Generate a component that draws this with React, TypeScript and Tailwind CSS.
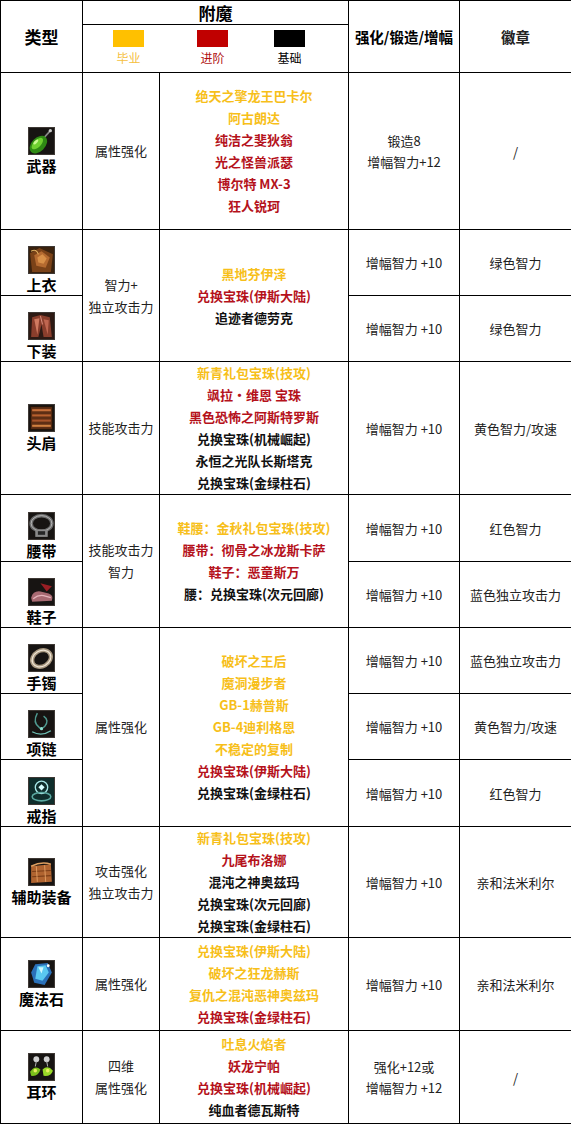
type Tone = "g" | "r" | "k";
type Line = [string, Tone];

type Item = {
  icon: string;
  name: string;
  h: string;
  short?: boolean;
  up: string[];
  badge: string;
};

type Group = {
  attr: string[];
  ench: Line[];
  items: Item[];
};

const toneClass: Record<Tone, string> = {
  g: "text-[#f7bf1a]",
  r: "text-[#b5121b]",
  k: "text-[#111]",
};

const groups: Group[] = [
  {
    attr: ["属性强化"],
    ench: [
      ["绝天之擎龙王巴卡尔", "g"],
      ["阿古朗达", "g"],
      ["纯洁之斐狄翁", "r"],
      ["光之怪兽派瑟", "r"],
      ["博尔特 MX-3", "r"],
      ["狂人锐珂", "r"],
    ],
    items: [{ icon: "weapon", name: "武器", h: "h-[157px]", up: ["锻造8", "增幅智力+12"], badge: "/" }],
  },
  {
    attr: ["智力+", "独立攻击力"],
    ench: [
      ["黑地芬伊泽", "g"],
      ["兑换宝珠(伊斯大陆)", "r"],
      ["追迹者德劳克", "k"],
    ],
    items: [
      { icon: "top", name: "上衣", h: "h-[66px]", short: true, up: ["增幅智力 +10"], badge: "绿色智力" },
      { icon: "bottom", name: "下装", h: "h-[66px]", short: true, up: ["增幅智力 +10"], badge: "绿色智力" },
    ],
  },
  {
    attr: ["技能攻击力"],
    ench: [
      ["新青礼包宝珠(技攻)", "g"],
      ["飒拉·维恩 宝珠", "r"],
      ["黑色恐怖之阿斯特罗斯", "r"],
      ["兑换宝珠(机械崛起)", "k"],
      ["永恒之光队长斯塔克", "k"],
      ["兑换宝珠(金绿柱石)", "k"],
    ],
    items: [{ icon: "shoulder", name: "头肩", h: "h-[133px]", up: ["增幅智力 +10"], badge: "黄色智力/攻速" }],
  },
  {
    attr: ["技能攻击力", "智力"],
    ench: [
      ["鞋腰：金秋礼包宝珠(技攻)", "g"],
      ["腰带：彻骨之冰龙斯卡萨", "r"],
      ["鞋子：恶童斯万", "r"],
      ["腰：兑换宝珠(次元回廊)", "k"],
    ],
    items: [
      { icon: "belt", name: "腰带", h: "h-[67px]", short: true, up: ["增幅智力 +10"], badge: "红色智力" },
      { icon: "shoes", name: "鞋子", h: "h-[66px]", short: true, up: ["增幅智力 +10"], badge: "蓝色独立攻击力" },
    ],
  },
  {
    attr: ["属性强化"],
    ench: [
      ["破坏之王后", "g"],
      ["魔洞漫步者", "g"],
      ["GB-1赫普斯", "g"],
      ["GB-4迪利格恩", "g"],
      ["不稳定的复制", "g"],
      ["兑换宝珠(伊斯大陆)", "r"],
      ["兑换宝珠(金绿柱石)", "k"],
    ],
    items: [
      { icon: "bracelet", name: "手镯", h: "h-[66px]", short: true, up: ["增幅智力 +10"], badge: "蓝色独立攻击力" },
      { icon: "necklace", name: "项链", h: "h-[66px]", short: true, up: ["增幅智力 +10"], badge: "黄色智力/攻速" },
      { icon: "ring", name: "戒指", h: "h-[67px]", short: true, up: ["增幅智力 +10"], badge: "红色智力" },
    ],
  },
  {
    attr: ["攻击强化", "独立攻击力"],
    ench: [
      ["新青礼包宝珠(技攻)", "g"],
      ["九尾布洛娜", "r"],
      ["混沌之神奥兹玛", "k"],
      ["兑换宝珠(次元回廊)", "k"],
      ["兑换宝珠(金绿柱石)", "k"],
    ],
    items: [{ icon: "aux", name: "辅助装备", h: "h-[111px]", up: ["增幅智力 +10"], badge: "亲和法米利尔" }],
  },
  {
    attr: ["属性强化"],
    ench: [
      ["兑换宝珠(伊斯大陆)", "g"],
      ["破坏之狂龙赫斯", "g"],
      ["复仇之混沌恶神奥兹玛", "g"],
      ["兑换宝珠(金绿柱石)", "r"],
    ],
    items: [{ icon: "stone", name: "魔法石", h: "h-[93px]", up: ["增幅智力 +10"], badge: "亲和法米利尔" }],
  },
  {
    attr: ["四维", "属性强化"],
    ench: [
      ["吐息火焰者", "g"],
      ["妖龙宁帕", "r"],
      ["兑换宝珠(机械崛起)", "r"],
      ["纯血者德瓦斯特", "k"],
    ],
    items: [{ icon: "earring", name: "耳环", h: "h-[93px]", up: ["强化+12或", "增幅智力 +12"], badge: "/" }],
  },
];

function ItemIcon({ kind }: { kind: string }) {
  return (
    <svg width="27" height="28" viewBox="0 0 26 27" className="block">
      <rect x="0.5" y="0.5" width="25" height="26" fill="#171412" stroke="#3e3834" />
      {kind === "weapon" && (
        <>
          <line x1="13" y1="13" x2="22" y2="3" stroke="#8a8a8a" strokeWidth="1.6" />
          <circle cx="21.5" cy="3.5" r="1.6" fill="#c8c8c8" />
          <ellipse cx="10" cy="17" rx="10" ry="6.5" transform="rotate(-45 10 17)" fill="#2f8a14" />
          <ellipse cx="9" cy="16" rx="7" ry="3.5" transform="rotate(-45 9 16)" fill="#6fd030" />
          <ellipse cx="7.5" cy="14.5" rx="3" ry="1.3" transform="rotate(-45 7.5 14.5)" fill="#c8f890" />
        </>
      )}
      {kind === "top" && (
        <>
          <rect x="1" y="1" width="24" height="25" fill="#3a220e" />
          <path d="M2 7 L11 2 L24 8 L22 25 L4 25 Z" fill="#7a4218" />
          <path d="M6 9 L13 5 L21 11 L17 21 L8 19 Z" fill="#b46a30" />
          <path d="M9 11 L14 8 L18 12 L15 17 L10 16 Z" fill="#d89048" />
          <path d="M3 5 Q8 2 10 8" stroke="#e0b060" strokeWidth="1" fill="none" />
        </>
      )}
      {kind === "bottom" && (
        <>
          <rect x="1" y="1" width="24" height="25" fill="#2e1a14" />
          <path d="M4 5 L12 3 L21 5 L23 24 L15 24 L13 12 L10 24 L3 24 Z" fill="#8a3e2c" />
          <path d="M6 7 L11 6 L9 22 Z" fill="#d07a60" />
          <path d="M15 7 L20 8 L19 22 Z" fill="#c06650" />
          <path d="M12 4 L14 12" stroke="#e8a090" strokeWidth="0.8" />
        </>
      )}
      {kind === "shoulder" && (
        <>
          <rect x="2.5" y="2.5" width="21" height="22" fill="#5e2e14" stroke="#231409" />
          <rect x="4" y="5" width="18" height="2" fill="#c8703a" />
          <rect x="4" y="10" width="18" height="2" fill="#b8602e" />
          <rect x="4" y="15" width="18" height="2" fill="#a8542a" />
          <rect x="4" y="20" width="18" height="2" fill="#d08040" />
        </>
      )}
      {kind === "belt" && (
        <>
          <ellipse cx="13" cy="11" rx="10" ry="7.5" fill="none" stroke="#6a6a6a" strokeWidth="3.5" />
          <ellipse cx="13" cy="11" rx="10" ry="7.5" fill="none" stroke="#c8c8c8" strokeWidth="0.8" />
          <rect x="7" y="17" width="12" height="7" fill="#8a8a8a" />
          <rect x="9.5" y="18.5" width="7" height="3.5" fill="#262626" />
        </>
      )}
      {kind === "shoes" && (
        <>
          <path d="M3 19 Q5 12 12 13 L20 15 Q25 17 23 22 L4 23 Z" fill="#a86a72" />
          <path d="M5 20 Q10 16 15 17 L22 19" stroke="#e4b4ba" strokeWidth="1.3" fill="none" />
          <path d="M12 5 L23 8 L18 13 Z" fill="#9a1e24" />
        </>
      )}
      {kind === "bracelet" && (
        <>
          <ellipse cx="13" cy="14" rx="9.5" ry="7.5" transform="rotate(-30 13 14)" fill="none" stroke="#a89880" strokeWidth="4" />
          <ellipse cx="13" cy="14" rx="9.5" ry="7.5" transform="rotate(-30 13 14)" fill="none" stroke="#f0e6d6" strokeWidth="1.2" />
        </>
      )}
      {kind === "necklace" && (
        <>
          <path d="M9 3 Q4 12 11 17 Q13 19 16 16 Q21 10 15 6" fill="none" stroke="#4f9a90" strokeWidth="1.4" />
          <path d="M4 21 Q13 26 22 20" fill="none" stroke="#6fc0b4" strokeWidth="1.3" />
          <circle cx="13" cy="18" r="1.5" fill="#8fe0d0" />
        </>
      )}
      {kind === "ring" && (
        <>
          <rect x="1" y="1" width="24" height="25" fill="#0f2e2c" />
          <circle cx="13" cy="10" r="6" fill="none" stroke="#a8e8e8" strokeWidth="1.3" />
          <path d="M10 10 L13 7 L16 10 L13 13 Z" fill="#d8ffff" />
          <ellipse cx="13" cy="19" rx="9" ry="4" fill="none" stroke="#5aa8a0" strokeWidth="1.5" />
        </>
      )}
      {kind === "aux" && (
        <>
          <path d="M3 8 L22 6 L23 23 L3 24 Z" fill="#b06430" />
          <path d="M3 8 Q13 3 22 6" stroke="#e0a060" strokeWidth="1.5" fill="none" />
          <path d="M4 13 L22 12 M4 18 L22 17" stroke="#7a3e18" strokeWidth="1" />
          <path d="M8 8 L9 23 M16 7 L17 23" stroke="#e8a468" strokeWidth="0.8" />
        </>
      )}
      {kind === "stone" && (
        <>
          <path d="M7 4 L19 3 L23 12 L16 24 L6 22 L3 12 Z" fill="#2a70b8" />
          <path d="M9 6 L17 5 L20 12 L14 20 L7 18 Z" fill="#5ac8f0" />
          <path d="M10 7 L15 7 L13 13 Z" fill="#d0f8ff" />
          <circle cx="19.5" cy="5.5" r="1.4" fill="#fff" />
        </>
      )}
      {kind === "earring" && (
        <>
          <circle cx="8" cy="6" r="2.8" fill="#d0d0d0" />
          <circle cx="18" cy="6" r="2.8" fill="#d0d0d0" />
          <path d="M8 8 L7 13 M18 8 L19 13" stroke="#aaa" strokeWidth="1" />
          <path d="M2 18 Q7 11 12 16 Q10 23 3 22 Z" fill="#7cc01c" />
          <path d="M14 16 Q19 11 24 17 Q22 23 15 22 Z" fill="#98d828" />
          <circle cx="7" cy="17" r="1.7" fill="#e8f060" />
          <circle cx="19" cy="17" r="1.7" fill="#e8f060" />
        </>
      )}
    </svg>
  );
}

export default function App() {
  const cell = "border border-black p-0 text-center align-middle";
  return (
    <div className="bg-white font-['Noto_Sans_CJK_SC',sans-serif] text-[#222]">
      <table className="w-[571px] table-fixed border-collapse">
        <colgroup>
          <col className="w-[82px]" />
          <col className="w-[77px]" />
          <col className="w-[189px]" />
          <col className="w-[111px]" />
          <col className="w-[112px]" />
        </colgroup>
        <thead>
          <tr className="h-[24px]">
            <th rowSpan={2} className={cell + " text-[17px] font-bold text-black"}>
              类型
            </th>
            <th colSpan={2} className={cell + " text-[17px] leading-[22px] font-bold text-black"}>
              附魔
            </th>
            <th rowSpan={2} className={cell + " text-[14.5px] font-bold text-black"}>
              强化/锻造/增幅
            </th>
            <th rowSpan={2} className={cell + " text-[14.5px] font-bold text-[#222]"}>
              徽章
            </th>
          </tr>
          <tr className="h-[48px]">
            <th colSpan={2} className={cell}>
              <div className="flex items-start pl-[30px]">
                <div className="flex w-[31px] flex-col items-center">
                  <div className="h-[17px] w-[31px] bg-[#ffc000]" />
                  <span className="mt-[2px] text-[12px] leading-[18px] font-normal text-[#f5c040]">毕业</span>
                </div>
                <div className="ml-[53px] flex w-[31px] flex-col items-center">
                  <div className="h-[17px] w-[31px] bg-[#c00000]" />
                  <span className="mt-[2px] text-[12px] leading-[18px] font-normal text-[#b01010]">进阶</span>
                </div>
                <div className="ml-[46px] flex w-[31px] flex-col items-center">
                  <div className="h-[17px] w-[31px] bg-black" />
                  <span className="mt-[2px] text-[12px] leading-[18px] font-normal text-black">基础</span>
                </div>
              </div>
            </th>
          </tr>
        </thead>
        <tbody>
          {groups.map((g, gi) =>
            g.items.map((item, i) => (
              <tr key={gi + "-" + i} className={item.h}>
                <td className={cell}>
                  <div className={"flex flex-col items-center" + (item.short ? " pt-[16px]" : "")}>
                    <ItemIcon kind={item.icon} />
                    <span className="mt-[1px] text-[15px] leading-[20px] font-bold text-black">{item.name}</span>
                  </div>
                </td>
                {i === 0 && (
                  <td rowSpan={g.items.length} className={cell + " text-[13px] leading-[22px]"}>
                    {g.attr.map((a) => (
                      <div key={a}>{a}</div>
                    ))}
                  </td>
                )}
                {i === 0 && (
                  <td rowSpan={g.items.length} className={cell + " text-[13px] leading-[22px] font-bold"}>
                    {g.ench.map(([t, tone]) => (
                      <div key={t} className={toneClass[tone]}>
                        {t}
                      </div>
                    ))}
                  </td>
                )}
                <td className={cell + " text-[13px] leading-[21px]"}>
                  {item.up.map((u) => (
                    <div key={u}>{u}</div>
                  ))}
                </td>
                <td className={cell + " text-[13px] leading-[21px]"}>{item.badge}</td>
              </tr>
            ))
          )}
        </tbody>
      </table>
    </div>
  );
}
